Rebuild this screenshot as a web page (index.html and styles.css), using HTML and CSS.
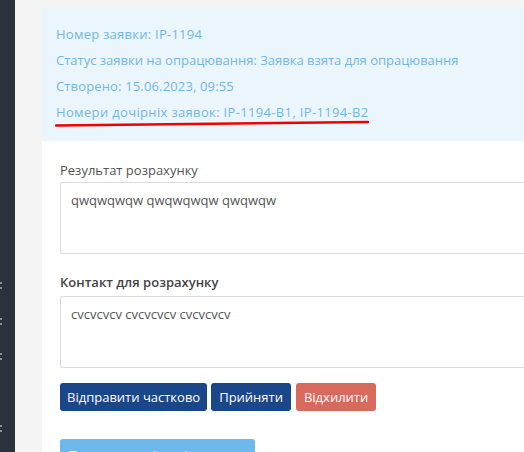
FILE: index.html
```html
<!DOCTYPE html>
<html>
<head>
<meta charset="utf-8">
<link rel="stylesheet" href="styles.css">
</head>
<body>
<div class="app">
  <aside class="sidebar">
    <span class="mark m1"></span>
    <span class="mark m2"></span>
    <span class="mark m3"></span>
    <span class="mark m4"></span>
  </aside>
  <div class="gutter"></div>
  <main class="content">
    <section class="info">
      <p class="l1">Номер заявки: IP-1194</p>
      <p>Статус заявки на опрацювання: Заявка взята для опрацювання</p>
      <p class="l3">Створено: 15.06.2023, 09:55</p>
      <p class="children">Номери дочірніх заявок: IP-1194-B1, IP-1194-B2
        <svg class="scribble" width="316" height="8" viewBox="0 0 316 8"><path d="M1 5.5 C 60 4.5, 120 4, 180 3.5 S 280 2.5, 313 2" stroke="#f00000" stroke-width="2.4" fill="none" stroke-linecap="round"/></svg>
      </p>
    </section>
    <section class="form">
      <div class="field">
        <label class="lbl">Результат розрахунку</label>
        <div class="area">qwqwqwqw qwqwqwqw qwqwqw</div>
      </div>
      <div class="field last">
        <label class="lbl bold">Контакт для розрахунку</label>
        <div class="area">cvcvcvcv cvcvcvcv cvcvcvcv</div>
      </div>
      <div class="actions">
        <button class="btn primary wide">Відправити частково</button>
        <button class="btn primary">Прийняти</button>
        <button class="btn danger">Відхилити</button>
      </div>
      <div class="more">
        <button class="btn info-btn">Переглянути історію заявки</button>
      </div>
    </section>
  </main>
</div>
</body>
</html>
```
FILE: styles.css
```css
* { box-sizing: border-box; }
html, body { margin: 0; padding: 0; }
body {
  font-family: "Open Sans", "Noto Sans", sans-serif;
  font-size: 13px;
  background: #f4f4f4;
  overflow: hidden;
  height: 452px;
}
.app { display: flex; height: 452px; overflow: hidden; }
.sidebar {
  width: 15px;
  flex: none;
  background: #2b323d;
  position: relative;
}
.mark {
  position: absolute;
  left: 0;
  width: 2px;
  height: 7px;
  border-top: 2px dotted #8a9099;
  border-bottom: 2px dotted #8a9099;
}
.m1 { top: 282px; }
.m2 { top: 318px; }
.m3 { top: 353px; }
.m4 { top: 425px; }
.gutter { width: 27px; flex: none; background: #f4f4f4; }
.content {
  flex: 1;
  margin-top: 8px;
  background: #fff;
  min-width: 0;
}
.info {
  background: #ebf5fc;
  padding: 13px 14px 16px 14px;
  color: #71b8ea;
  height: 133px;
}
.info p {
  margin: 0;
  line-height: 26px;
  white-space: nowrap;
}
.info .l1 { letter-spacing: 0.25px; }
.info .l3 { letter-spacing: 0.15px; }
.info .children { letter-spacing: 0.34px; }
.children { position: relative; display: inline-block; }
.scribble { position: absolute; left: -1px; top: 21px; }
.form { padding: 20px 0 0 18px; }
.field { margin-bottom: 19px; }
.field.last { margin-bottom: 0; }
.lbl {
  display: block;
  color: #555;
  line-height: 18px;
  margin-bottom: 3px;
}
.lbl.bold { font-weight: 600; color: #444; margin-bottom: 5px; }
.area {
  height: 72px;
  border: 1px solid #dcdcdc;
  border-right: none;
  border-radius: 3px 0 0 3px;
  padding: 8px 10px;
  color: #555;
  line-height: 18px;
}
.actions { display: flex; gap: 4px; margin-top: 15px; }
.btn {
  font-family: inherit;
  font-size: 13px;
  color: #fff;
  border: none;
  border-radius: 3px;
  height: 28px;
  padding: 0 8px;
  line-height: 28px;
}
.btn.wide { padding: 0 7px; }
.primary { background: #1a468a; }
.danger { background: #d76a5c; margin-left: 1px; }
.more { margin-top: 28px; }
.info-btn {
  background: #6db8ec;
  width: 195px;
  height: auto;
  line-height: 18px;
  padding: 7px 8px 11px;
  text-align: left;
}
```
